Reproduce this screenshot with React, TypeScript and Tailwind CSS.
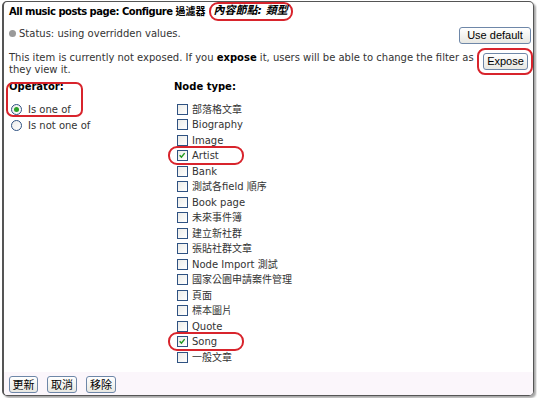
import React from "react";

const items: { label: string; checked?: boolean; oval?: boolean }[] = [
  { label: "部落格文章" },
  { label: "Biography" },
  { label: "Image" },
  { label: "Artist", checked: true, oval: true },
  { label: "Bank" },
  { label: "測試各field 順序" },
  { label: "Book page" },
  { label: "未來事件簿" },
  { label: "建立新社群" },
  { label: "張貼社群文章" },
  { label: "Node Import 測試" },
  { label: "國家公園申請案件管理" },
  { label: "頁面" },
  { label: "標本圖片" },
  { label: "Quote" },
  { label: "Song", checked: true, oval: true },
  { label: "一般文章" },
];

function Checkbox({ checked }: { checked?: boolean }) {
  return (
    <span className="relative inline-block w-[11px] h-[11px] border border-[#2f5282] bg-gradient-to-br from-[#ecece8] to-[#ffffff] shrink-0">
      {checked && (
        <svg viewBox="0 0 10 10" className="absolute left-[0px] top-[0px] w-[9px] h-[9px]">
          <path d="M1.8 4.8 L3.8 6.8 L7.4 2.4" fill="none" stroke="#1f9a1f" strokeWidth="1.6" />
        </svg>
      )}
    </span>
  );
}

function Radio({ checked }: { checked?: boolean }) {
  return (
    <span className="relative inline-flex items-center justify-center w-[11px] h-[11px] rounded-full border border-[#2f5282] bg-gradient-to-br from-[#ececea] to-[#ffffff] shrink-0">
      {checked && <span className="w-[5px] h-[5px] rounded-full bg-[#2aa12a]" />}
    </span>
  );
}

function Btn({ children, className = "" }: { children: React.ReactNode; className?: string }) {
  return (
    <button
      className={
        "h-[17px] border border-[#6e87a8] rounded-[3px] bg-gradient-to-b from-[#ffffff] to-[#e8e8e2] text-black leading-none flex items-center justify-center " +
        className
      }
    >
      {children}
    </button>
  );
}

export default function App() {
  return (
    <div className="w-[537px] h-[398px] bg-white pt-[1px] pl-[2px] font-['DejaVu_Sans','Noto_Sans_CJK_TC',sans-serif] text-[10px] text-[#222]">
      <div className="relative w-[532px] h-[395px] border border-l-2 border-[#555] rounded-[5px] shadow-[2px_2px_2px_rgba(0,0,0,0.35)] flex flex-col overflow-hidden">
        {/* Title */}
        <div className="h-[18px] pl-[5px] flex items-center font-bold text-black whitespace-nowrap">
          <span className="tracking-[-0.5px]">All music posts page: Configure </span>
          <span className="ml-[3px]">過濾器</span>
          <span className="ml-[3px] h-[19px] px-[3px] flex items-center border-2 border-[#d8242c] rounded-[9px] italic text-[11px]">
            內容節點: 類型
          </span>
        </div>

        {/* Status row */}
        <div className="mt-[7px] pl-[5px] pr-[2px] flex items-start justify-between">
          <div className="flex items-center leading-[13px] text-[#333]">
            <span className="w-[7px] h-[7px] rounded-full bg-[#9a9a9a] mr-[3px] inline-block" />
            <span>Status: using overridden values.</span>
          </div>
          <Btn className="w-[72px] font-['Liberation_Sans',sans-serif] text-[11px]">Use default</Btn>
        </div>

        {/* Paragraph */}
        <div className="mt-[8px] pl-[5px] pr-[5px] leading-[12px] text-[#333]">
          <span className="float-right relative mt-[1px] ml-[8px]">
            <Btn className="w-[45px] font-['Liberation_Sans',sans-serif] text-[11px]">Expose</Btn>
            <span className="absolute -left-[6px] -top-[5px] w-[56px] h-[27px] border-2 border-[#d8242c] rounded-[8px]" />
          </span>
          <span>
            This item is currently not exposed. If you <span className="font-bold text-black">expose</span> it, users will be able to change the filter as they view it.
          </span>
        </div>

        {/* Columns */}
        <div className="mt-[5px] pl-[5px] flex text-[#333]">
          <div className="relative w-[165px]">
            <div className="h-[12px] leading-[12px] font-bold text-black">Operator:</div>
            <div className="mt-[8px] flex flex-col">
              <div className="h-[16px] flex items-center pl-[2px] gap-[6px]">
                <Radio checked />
                <span>Is one of</span>
              </div>
              <div className="h-[16px] flex items-center pl-[2px] gap-[6px]">
                <Radio />
                <span>Is not one of</span>
              </div>
            </div>
            <span className="absolute -left-[3px] top-[1px] w-[77px] h-[35px] border-2 border-[#d8242c] rounded-[7px]" />
          </div>
          <div>
            <div className="h-[12px] leading-[12px] font-bold text-black">Node type:</div>
            <div className="mt-[8.5px] flex flex-col">
              {items.map((it) => (
                <div key={it.label} className="relative h-[15.5px] flex items-center pl-[3px] gap-[4px] whitespace-nowrap">
                  <Checkbox checked={it.checked} />
                  <span>{it.label}</span>
                  {it.oval && (
                    <span className="absolute -left-[6px] -top-[2px] w-[76px] h-[19px] border-2 border-[#d8242c] rounded-[9px]" />
                  )}
                </div>
              ))}
            </div>
          </div>
        </div>

        {/* Bottom bar */}
        <div className="mt-auto h-[23px] bg-[#fbf6fb] pl-[5px] pt-[4px] flex gap-[9px]">
          <Btn className="w-[29px] text-[11px] font-['Noto_Sans_CJK_TC',sans-serif]">更新</Btn>
          <Btn className="w-[30px] text-[11px] font-['Noto_Sans_CJK_TC',sans-serif]">取消</Btn>
          <Btn className="w-[30px] text-[11px] font-['Noto_Sans_CJK_TC',sans-serif]">移除</Btn>
        </div>
      </div>
    </div>
  );
}
